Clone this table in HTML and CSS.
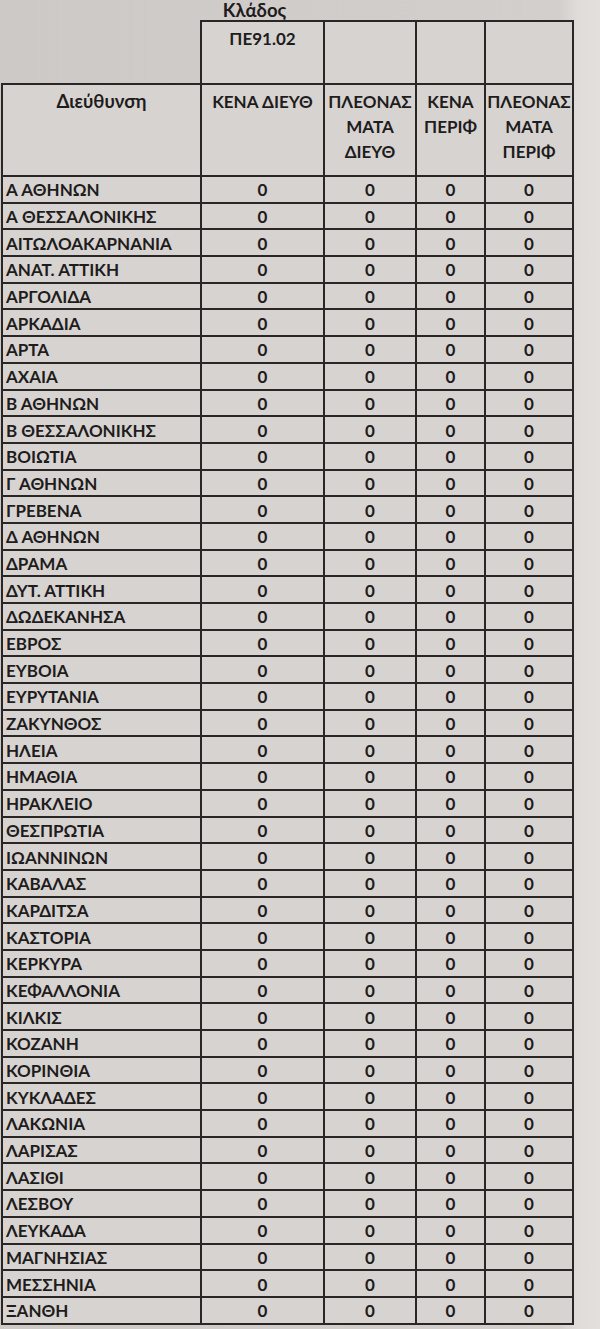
FILE: index.html
```html
<!DOCTYPE html>
<html lang="el">
<head>
<meta charset="utf-8">
<title>Κλάδος ΠΕ91.02</title>
<link rel="stylesheet" href="styles.css">
</head>
<body>
<div class="sheet">
<table class="grid">
<colgroup>
<col class="c-name"><col class="c-v1"><col class="c-v2"><col class="c-v3"><col class="c-v4">
</colgroup>
<thead>
<tr class="cap-row"><th class="blank"></th><th class="cap lower">Κλάδος</th><th class="blank"></th><th class="blank"></th><th class="blank"></th></tr>
<tr class="klados-row"><th class="nob"></th><th>ΠΕ91.02</th><th></th><th></th><th></th></tr>
<tr class="head-row"><th class="lower">Διεύθυνση</th><th>ΚΕΝΑ ΔΙΕΥΘ</th><th>ΠΛΕΟΝΑΣ<br>ΜΑΤΑ<br>ΔΙΕΥΘ</th><th>ΚΕΝΑ<br>ΠΕΡΙΦ</th><th>ΠΛΕΟΝΑΣ<br>ΜΑΤΑ<br>ΠΕΡΙΦ</th></tr>
</thead>
<tbody>
<tr><td>Α ΑΘΗΝΩΝ</td><td>0</td><td>0</td><td>0</td><td>0</td></tr>
<tr><td>Α ΘΕΣΣΑΛΟΝΙΚΗΣ</td><td>0</td><td>0</td><td>0</td><td>0</td></tr>
<tr><td>ΑΙΤΩΛΟΑΚΑΡΝΑΝΙΑ</td><td>0</td><td>0</td><td>0</td><td>0</td></tr>
<tr><td>ΑΝΑΤ. ΑΤΤΙΚΗ</td><td>0</td><td>0</td><td>0</td><td>0</td></tr>
<tr><td>ΑΡΓΟΛΙΔΑ</td><td>0</td><td>0</td><td>0</td><td>0</td></tr>
<tr><td>ΑΡΚΑΔΙΑ</td><td>0</td><td>0</td><td>0</td><td>0</td></tr>
<tr><td>ΑΡΤΑ</td><td>0</td><td>0</td><td>0</td><td>0</td></tr>
<tr><td>ΑΧΑΙΑ</td><td>0</td><td>0</td><td>0</td><td>0</td></tr>
<tr><td>Β ΑΘΗΝΩΝ</td><td>0</td><td>0</td><td>0</td><td>0</td></tr>
<tr><td>Β ΘΕΣΣΑΛΟΝΙΚΗΣ</td><td>0</td><td>0</td><td>0</td><td>0</td></tr>
<tr><td>ΒΟΙΩΤΙΑ</td><td>0</td><td>0</td><td>0</td><td>0</td></tr>
<tr><td>Γ ΑΘΗΝΩΝ</td><td>0</td><td>0</td><td>0</td><td>0</td></tr>
<tr><td>ΓΡΕΒΕΝΑ</td><td>0</td><td>0</td><td>0</td><td>0</td></tr>
<tr><td>Δ ΑΘΗΝΩΝ</td><td>0</td><td>0</td><td>0</td><td>0</td></tr>
<tr><td>ΔΡΑΜΑ</td><td>0</td><td>0</td><td>0</td><td>0</td></tr>
<tr><td>ΔΥΤ. ΑΤΤΙΚΗ</td><td>0</td><td>0</td><td>0</td><td>0</td></tr>
<tr><td>ΔΩΔΕΚΑΝΗΣΑ</td><td>0</td><td>0</td><td>0</td><td>0</td></tr>
<tr><td>ΕΒΡΟΣ</td><td>0</td><td>0</td><td>0</td><td>0</td></tr>
<tr><td>ΕΥΒΟΙΑ</td><td>0</td><td>0</td><td>0</td><td>0</td></tr>
<tr><td>ΕΥΡΥΤΑΝΙΑ</td><td>0</td><td>0</td><td>0</td><td>0</td></tr>
<tr><td>ΖΑΚΥΝΘΟΣ</td><td>0</td><td>0</td><td>0</td><td>0</td></tr>
<tr><td>ΗΛΕΙΑ</td><td>0</td><td>0</td><td>0</td><td>0</td></tr>
<tr><td>ΗΜΑΘΙΑ</td><td>0</td><td>0</td><td>0</td><td>0</td></tr>
<tr><td>ΗΡΑΚΛΕΙΟ</td><td>0</td><td>0</td><td>0</td><td>0</td></tr>
<tr><td>ΘΕΣΠΡΩΤΙΑ</td><td>0</td><td>0</td><td>0</td><td>0</td></tr>
<tr><td>ΙΩΑΝΝΙΝΩΝ</td><td>0</td><td>0</td><td>0</td><td>0</td></tr>
<tr><td>ΚΑΒΑΛΑΣ</td><td>0</td><td>0</td><td>0</td><td>0</td></tr>
<tr><td>ΚΑΡΔΙΤΣΑ</td><td>0</td><td>0</td><td>0</td><td>0</td></tr>
<tr><td>ΚΑΣΤΟΡΙΑ</td><td>0</td><td>0</td><td>0</td><td>0</td></tr>
<tr><td>ΚΕΡΚΥΡΑ</td><td>0</td><td>0</td><td>0</td><td>0</td></tr>
<tr><td>ΚΕΦΑΛΛΟΝΙΑ</td><td>0</td><td>0</td><td>0</td><td>0</td></tr>
<tr><td>ΚΙΛΚΙΣ</td><td>0</td><td>0</td><td>0</td><td>0</td></tr>
<tr><td>ΚΟΖΑΝΗ</td><td>0</td><td>0</td><td>0</td><td>0</td></tr>
<tr><td>ΚΟΡΙΝΘΙΑ</td><td>0</td><td>0</td><td>0</td><td>0</td></tr>
<tr><td>ΚΥΚΛΑΔΕΣ</td><td>0</td><td>0</td><td>0</td><td>0</td></tr>
<tr><td>ΛΑΚΩΝΙΑ</td><td>0</td><td>0</td><td>0</td><td>0</td></tr>
<tr><td>ΛΑΡΙΣΑΣ</td><td>0</td><td>0</td><td>0</td><td>0</td></tr>
<tr><td>ΛΑΣΙΘΙ</td><td>0</td><td>0</td><td>0</td><td>0</td></tr>
<tr><td>ΛΕΣΒΟΥ</td><td>0</td><td>0</td><td>0</td><td>0</td></tr>
<tr><td>ΛΕΥΚΑΔΑ</td><td>0</td><td>0</td><td>0</td><td>0</td></tr>
<tr><td>ΜΑΓΝΗΣΙΑΣ</td><td>0</td><td>0</td><td>0</td><td>0</td></tr>
<tr><td>ΜΕΣΣΗΝΙΑ</td><td>0</td><td>0</td><td>0</td><td>0</td></tr>
<tr><td>ΞΑΝΘΗ</td><td>0</td><td>0</td><td>0</td><td>0</td></tr>
</tbody>
</table>
</div>
</body>
</html>
```
FILE: styles.css
```css
html, body {
  margin: 0;
  padding: 0;
}
body {
  background: linear-gradient(to right, #cdc9c7 0, #d3cfcd 560px, #dfdcda 578px, #e2dfdd 600px);
  font-family: Lato, "Open Sans", "DejaVu Sans", sans-serif;
  font-weight: 700;
  color: #1e1c1c;
  width: 600px;
  height: 1329px;
  overflow: hidden;
}
.sheet {
  padding-left: 1px;
}
.grid {
  border-collapse: collapse;
  table-layout: fixed;
  width: 571px;
  font-size: 17px;
}
.c-name { width: 199px; }
.c-v1 { width: 123px; }
.c-v2 { width: 92px; }
.c-v3 { width: 69px; }
.c-v4 { width: 88px; }

.grid th, .grid td {
  border: 2px solid #2a2626;
  padding: 0;
  background: #d7d3d1;
}
.grid th {
  font-weight: 700;
  vertical-align: top;
  text-align: center;
  line-height: 25px;
}
.grid th.lower {
  font-size: 18.5px;
  font-weight: 700;
}
.cap-row th {
  border: none;
  background: transparent;
  height: 20px;
  line-height: 20px;
  vertical-align: bottom;
}
.cap-row .cap {
  position: relative;
  left: -8px;
}
.klados-row th {
  height: 63px;
  padding-top: 4px;
  box-sizing: border-box;
}
.klados-row .nob {
  border-left: none;
  border-top: none;
  background: transparent;
}
.head-row th {
  height: 92px;
  padding-top: 4px;
  box-sizing: border-box;
}
.grid td {
  height: 26.7px;
  box-sizing: border-box;
  text-align: center;
  vertical-align: middle;
  line-height: 20px;
  padding-top: 2px;
}
.grid td:first-child {
  text-align: left;
  padding-left: 3px;
}
```
